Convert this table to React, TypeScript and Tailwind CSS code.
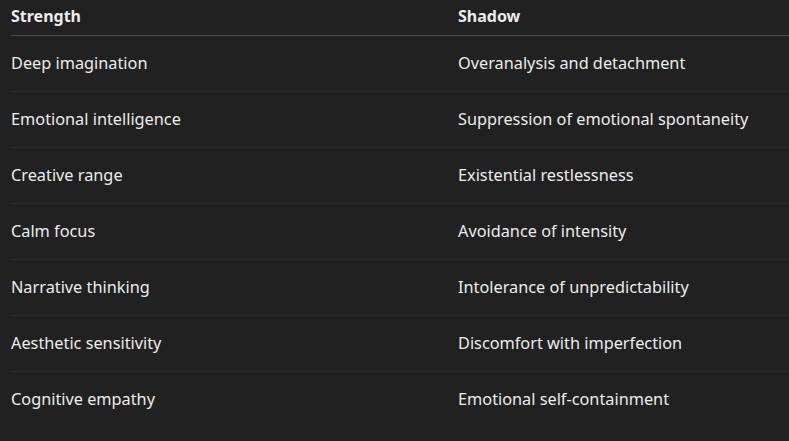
const rows = [
  ["Deep imagination", "Overanalysis and detachment"],
  ["Emotional intelligence", "Suppression of emotional spontaneity"],
  ["Creative range", "Existential restlessness"],
  ["Calm focus", "Avoidance of intensity"],
  ["Narrative thinking", "Intolerance of unpredictability"],
  ["Aesthetic sensitivity", "Discomfort with imperfection"],
  ["Cognitive empathy", "Emotional self-containment"],
];

export default function App() {
  return (
    <div
      className="w-[789px] h-[441px] overflow-hidden bg-[#212121] text-[#ececec] text-[16px] leading-6"
      style={{ fontFamily: '"Segoe UI", "Noto Sans", "Open Sans", sans-serif' }}
    >
      <div className="ml-[11px] w-[800px]">
        <div className="grid grid-cols-[447px_1fr] h-[36px] pt-1 border-b border-[#4a4a4a] font-bold">
          <div>Strength</div>
          <div>Shadow</div>
        </div>
        {rows.map((r, i) => (
          <div
            key={i}
            className="grid grid-cols-[447px_1fr] items-center h-[56px] pb-[2px] text-[16.3px] border-b border-[#303030] last:border-b-0"
          >
            <div>{r[0]}</div>
            <div>{r[1]}</div>
          </div>
        ))}
      </div>
    </div>
  );
}
